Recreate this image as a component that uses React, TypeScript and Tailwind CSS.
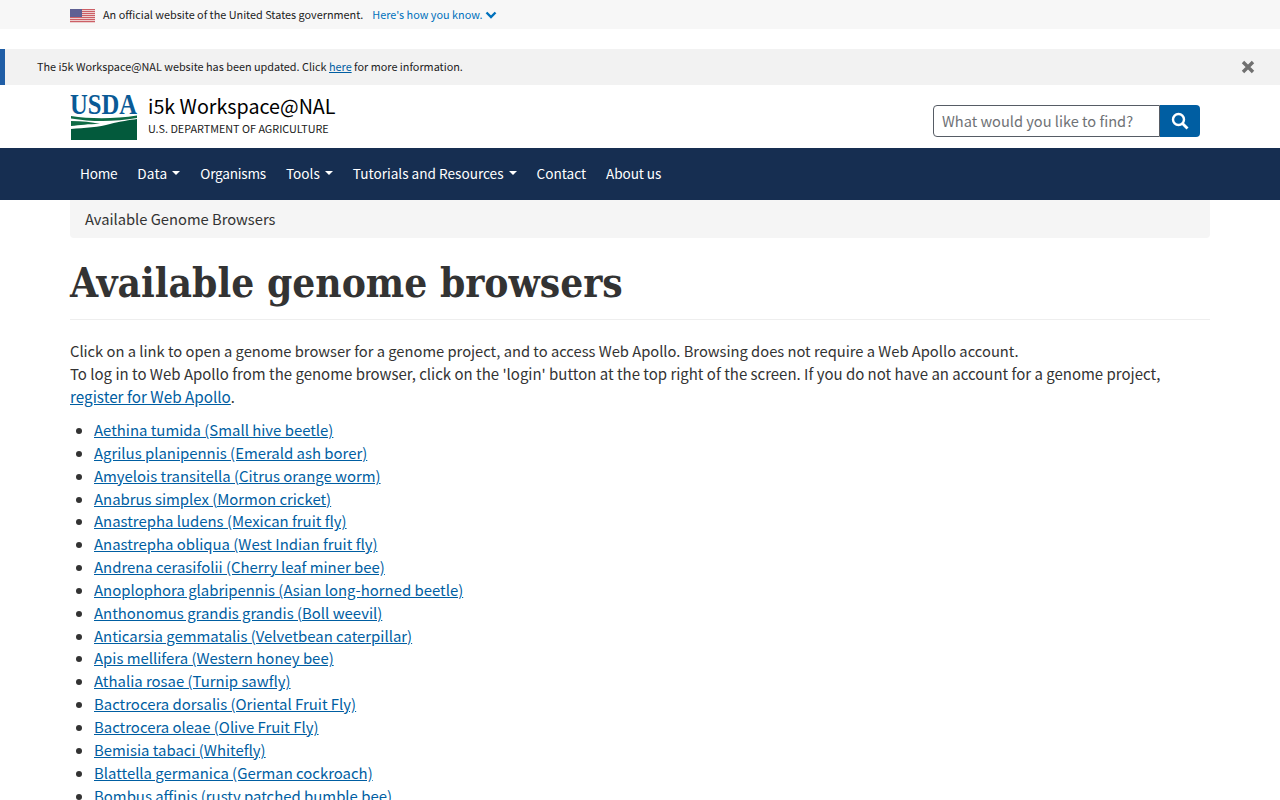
const sans = "font-['Noto_Sans_CJK_JP','Noto_Sans',sans-serif]";

const organisms = [
  "Aethina tumida (Small hive beetle)",
  "Agrilus planipennis (Emerald ash borer)",
  "Amyelois transitella (Citrus orange worm)",
  "Anabrus simplex (Mormon cricket)",
  "Anastrepha ludens (Mexican fruit fly)",
  "Anastrepha obliqua (West Indian fruit fly)",
  "Andrena cerasifolii (Cherry leaf miner bee)",
  "Anoplophora glabripennis (Asian long-horned beetle)",
  "Anthonomus grandis grandis (Boll weevil)",
  "Anticarsia gemmatalis (Velvetbean caterpillar)",
  "Apis mellifera (Western honey bee)",
  "Athalia rosae (Turnip sawfly)",
  "Bactrocera dorsalis (Oriental Fruit Fly)",
  "Bactrocera oleae (Olive Fruit Fly)",
  "Bemisia tabaci (Whitefly)",
  "Blattella germanica (German cockroach)",
  "Bombus affinis (rusty patched bumble bee)",
];

function Flag() {
  return (
    <svg width="25" height="14" viewBox="0 0 25 14" className="shrink-0 mt-[2px]">
      <rect width="25" height="14" fill="#eccfcf" />
      {[0, 2, 4, 6, 8, 10, 12].map((y) => (
        <rect key={y} y={y} width="25" height="1" fill="#cc5f66" />
      ))}
      <rect width="12" height="8" fill="#5f6093" />
    </svg>
  );
}

function Logo() {
  return (
    <svg width="68" height="48" viewBox="0 0 68 48" className="shrink-0">
      <text x="0" y="20.5" fontFamily="'Liberation Serif',serif" fontWeight="700" fontSize="29" fill="#0a5a96" textLength="67" lengthAdjust="spacingAndGlyphs">USDA</text>
      <path d="M1 23 C20 26 45 26 67 22.5 V25 C45 29 22 29 1 25.5Z" fill="#0f6b45" />
      <path d="M1 28 C12 28 22 29 30 31 C18 31 10 32 1 33Z" fill="#0f6b45" />
      <path d="M1 47 V36 C14 35 30 34 40 31 C50 28.5 60 27 67 26 V47Z" fill="#035a3c" />
    </svg>
  );
}

function Caret() {
  return <span className="ml-[5px] inline-block align-middle border-x-4 border-t-4 border-x-transparent border-t-white" />;
}

function NavItem({ label, caret, track }: { label: string; caret?: boolean; track?: string }) {
  return (
    <a className={`px-[10px] h-[52px] pb-[2px] flex items-center text-white text-[13.6px] ${track ?? ""}`}>
      {label}
      {caret && <Caret />}
    </a>
  );
}

export default function App() {
  return (
    <div className={`${sans} h-[800px] overflow-hidden bg-white text-[#333] text-[14.72px]`}>
      <div className="h-[29px] bg-[#f7f7f7] pl-[70px] flex items-center text-[10.85px] text-[#212121]">
        <Flag />
        <span className="ml-2">An official website of the United States government.</span>
        <a className="ml-[9px] text-[#0071bc]">Here's how you know.</a>
        <svg width="12" height="8" viewBox="0 0 12 8" className="ml-[3px]">
          <path d="M1.5 1.5 L6 6 L10.5 1.5" fill="none" stroke="#0071bc" strokeWidth="2.4" />
        </svg>
      </div>

      <div className="mt-5 h-[36px] bg-[#f2f2f2] border-l-[5px] border-[#205ea6] pl-8 pr-[25px] pb-[2px] flex items-center justify-between text-[10.85px] text-[#212121]">
        <span>
          The i5k Workspace@NAL website has been updated. Click <a className="underline text-[#005ea2]">here</a> for more information.
        </span>
        <svg width="14" height="14" viewBox="0 0 14 14" className="mt-[2px]">
          <path d="M2 2 L12 12 M12 2 L2 12" stroke="#707070" strokeWidth="3.4" />
        </svg>
      </div>

      <div className="h-[63px] px-[70px] pt-2 flex justify-between">
        <div className="flex gap-[10px] h-[48px]">
          <Logo />
          <div className="-mt-[1px]">
            <div className="text-[19.7px] leading-[28px] text-black">i5k Workspace@NAL</div>
            <div className="text-[10.8px] leading-[17px] text-[#212121]">U.S. DEPARTMENT OF AGRICULTURE</div>
          </div>
        </div>
        <div className="flex mt-3 mr-[10px] h-[32px]">
          <div className="w-[227px] border border-[#565c65] rounded-l-[4px] px-2 flex items-center text-[14.6px] text-[#6f7276]">
            What would you like to find?
          </div>
          <button className="w-10 bg-[#005ea2] rounded-r-[4px] flex items-center justify-center">
            <svg width="18" height="18" viewBox="0 0 18 18">
              <circle cx="7.5" cy="7.5" r="5.5" fill="none" stroke="white" strokeWidth="2.4" />
              <path d="M11.5 11.5 L16.5 16.5" stroke="white" strokeWidth="2.8" />
            </svg>
          </button>
        </div>
      </div>

      <nav className="h-[52px] bg-[#162e51] px-[70px] flex">
        <NavItem label="Home" track="tracking-[-0.25px]" />
        <NavItem label="Data" caret track="tracking-[0.2px]" />
        <NavItem label="Organisms" track="tracking-[-0.22px]" />
        <NavItem label="Tools" caret />
        <NavItem label="Tutorials and Resources" caret />
        <NavItem label="Contact" />
        <NavItem label="About us" track="tracking-[-0.1px]" />
      </nav>

      <main className="px-[70px]">
        <div className="h-[38px] bg-[#f5f5f5] rounded-b-[4px] px-[15px] flex items-center">Available Genome Browsers</div>
        <h1 className="mt-[19px] pb-[10px] border-b border-[#eee] font-['DejaVu_Serif_Condensed','DejaVu_Serif',serif] font-bold text-[40.3px] leading-[52px] text-[#333]">
          Available genome browsers
        </h1>
        <p className="mt-[19px] leading-[23px]">
          Click on a link to open a genome browser for a genome project, and to access Web Apollo. Browsing does not require a Web Apollo account.
          <br />
          <span className="text-[14.97px]">To log in to Web Apollo from the genome browser, click on the 'login' button at the top right of the screen. If you do not have an account for a genome project,</span>
          <br />
          <a className="underline text-[#005ea2] text-[15.25px]">register for Web Apollo</a>.
        </p>
        <ul className="mt-[11px] pl-6 list-disc leading-[22.85px] text-[14.92px]">
          {organisms.map((o) => (
            <li key={o}>
              <a className="underline text-[#005ea2]">{o}</a>
            </li>
          ))}
        </ul>
      </main>
    </div>
  );
}
